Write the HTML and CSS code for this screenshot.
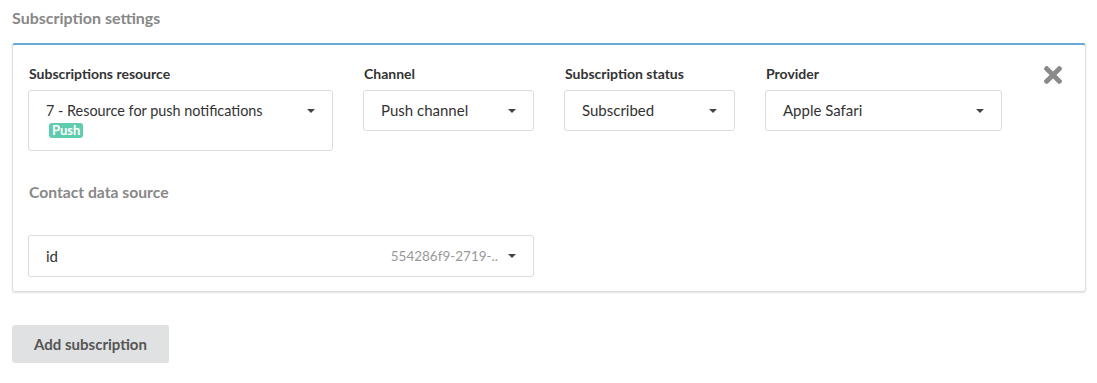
FILE: index.html
```html
<!DOCTYPE html>
<html lang="en">

<head>
	<meta charset="UTF-8">
	<title>Subscription settings</title>
	<link rel="stylesheet" href="styles.css">
</head>

<body>
	<div class="page">
		<div class="section-title">Subscription settings</div>

		<div class="card">
			<div class="card-row">
				<div class="field field-resource">
					<div class="field-label">Subscriptions resource</div>
					<div class="select select-tall">
						<div class="select-value">
							<span>7 - Resource for push notifications</span>
							<span class="badge">Push</span>
						</div>
						<span class="caret"></span>
					</div>
				</div>
				<div class="field field-channel">
					<div class="field-label">Channel</div>
					<div class="select">
						<div class="select-value">Push channel</div>
						<span class="caret"></span>
					</div>
				</div>
				<div class="field field-status">
					<div class="field-label">Subscription status</div>
					<div class="select">
						<div class="select-value">Subscribed</div>
						<span class="caret"></span>
					</div>
				</div>
				<div class="field field-provider">
					<div class="field-label">Provider</div>
					<div class="select">
						<div class="select-value">Apple Safari</div>
						<span class="caret"></span>
					</div>
				</div>
				<button class="remove" title="Remove">
					<svg width="18" height="18" viewBox="0 80 352 352">
						<path fill="#8a8a8a" d="M242.72 256l100.07-100.07c12.28-12.28 12.28-32.19 0-44.48l-22.24-22.240c-12.28-12.28-32.19-12.28-44.48 0L176 189.28 75.93 89.21c-12.28-12.28-32.19-12.28-44.48 0L9.21 111.45c-12.28 12.28-12.28 32.19 0 44.48L109.28 256 9.21 356.07c-12.28 12.28-12.28 32.19 0 44.48l22.24 22.24c12.28 12.28 32.2 12.28 44.48 0L176 322.72l100.07 100.07c12.28 12.28 32.2 12.28 44.48 0l22.24-22.24c12.28-12.28 12.28-32.19 0-44.48L242.72 256z" />
					</svg>
				</button>
			</div>

			<div class="sub-title">Contact data source</div>
			<div class="select select-source">
				<div class="select-value">id</div>
				<span class="select-hint">554286f9-2719-..</span>
				<span class="caret"></span>
			</div>
		</div>

		<button class="btn-add">Add subscription</button>
	</div>
</body>

</html>
```

FILE: styles.css
```css
* {
	box-sizing: border-box;
	font-family: "Lato", "Noto Sans", sans-serif;
}

body {
	margin: 0;
	background: #fff;
	color: #333;
}

.page {
	padding: 8px 11px 0 12px;
}

.section-title {
	font-size: 16px;
	font-weight: bold;
	color: #888;
	line-height: 20px;
	margin-bottom: 15px;
}

.card {
	border: 1px solid #ddd;
	border-top: 2px solid #67a8d5;
	border-radius: 3px;
	box-shadow: 0 1px 2px rgba(0, 0, 0, 0.12);
	padding: 20px 16px 14px 15px;
}

.card-row {
	display: flex;
	align-items: flex-start;
	gap: 30px;
}

.field-label {
	font-size: 14px;
	font-weight: bold;
	color: #333;
	line-height: 17px;
	margin-bottom: 8px;
	padding-left: 1px;
}

.field-resource {
	width: 305px;
}

.field-channel {
	width: 171px;
}

.field-status {
	width: 171px;
}

.field-provider {
	width: 237px;
}

.select {
	display: flex;
	align-items: center;
	height: 41px;
	border: 1px solid #dcdcdc;
	border-radius: 3px;
	padding: 0 17px 0 17px;
	font-size: 15px;
	color: #333;
	background: #fff;
}

.select-tall {
	height: 61px;
	align-items: flex-start;
	padding-top: 10px;
	font-size: 14.4px;
}

.select-tall .caret {
	margin-top: 8px;
}

.select-value {
	flex: 1;
	line-height: 19px;
}

.select-value span {
	display: block;
}

.badge {
	display: inline-block !important;
	margin-left: 3px;
	margin-top: -1px;
	padding: 0 3px;
	background: #5fcdad;
	color: #fff;
	font-size: 13px;
	font-weight: bold;
	line-height: 15px;
	border-radius: 3px;
	width: max-content;
}

.caret {
	width: 0;
	height: 0;
	border-left: 4px solid transparent;
	border-right: 4px solid transparent;
	border-top: 4px solid #444;
	margin-left: 10px;
}

.remove {
	margin-left: auto;
	margin-top: 1px;
	margin-right: 7px;
	padding: 0;
	border: 0;
	background: none;
	cursor: pointer;
}

.sub-title {
	font-size: 15.7px;
	font-weight: bold;
	color: #888;
	line-height: 19px;
	margin-top: 32px;
	margin-bottom: 33px;
	padding-left: 1px;
}

.select-source {
	width: 506px;
	height: 42px;
}

.select-hint {
	color: #999;
	font-size: 13.5px;
}

.btn-add {
	margin-top: 33px;
	width: 157px;
	height: 38px;
	border: 0;
	border-radius: 3px;
	background: #e0e1e3;
	color: #555;
	font-size: 15px;
	font-weight: bold;
}
```
